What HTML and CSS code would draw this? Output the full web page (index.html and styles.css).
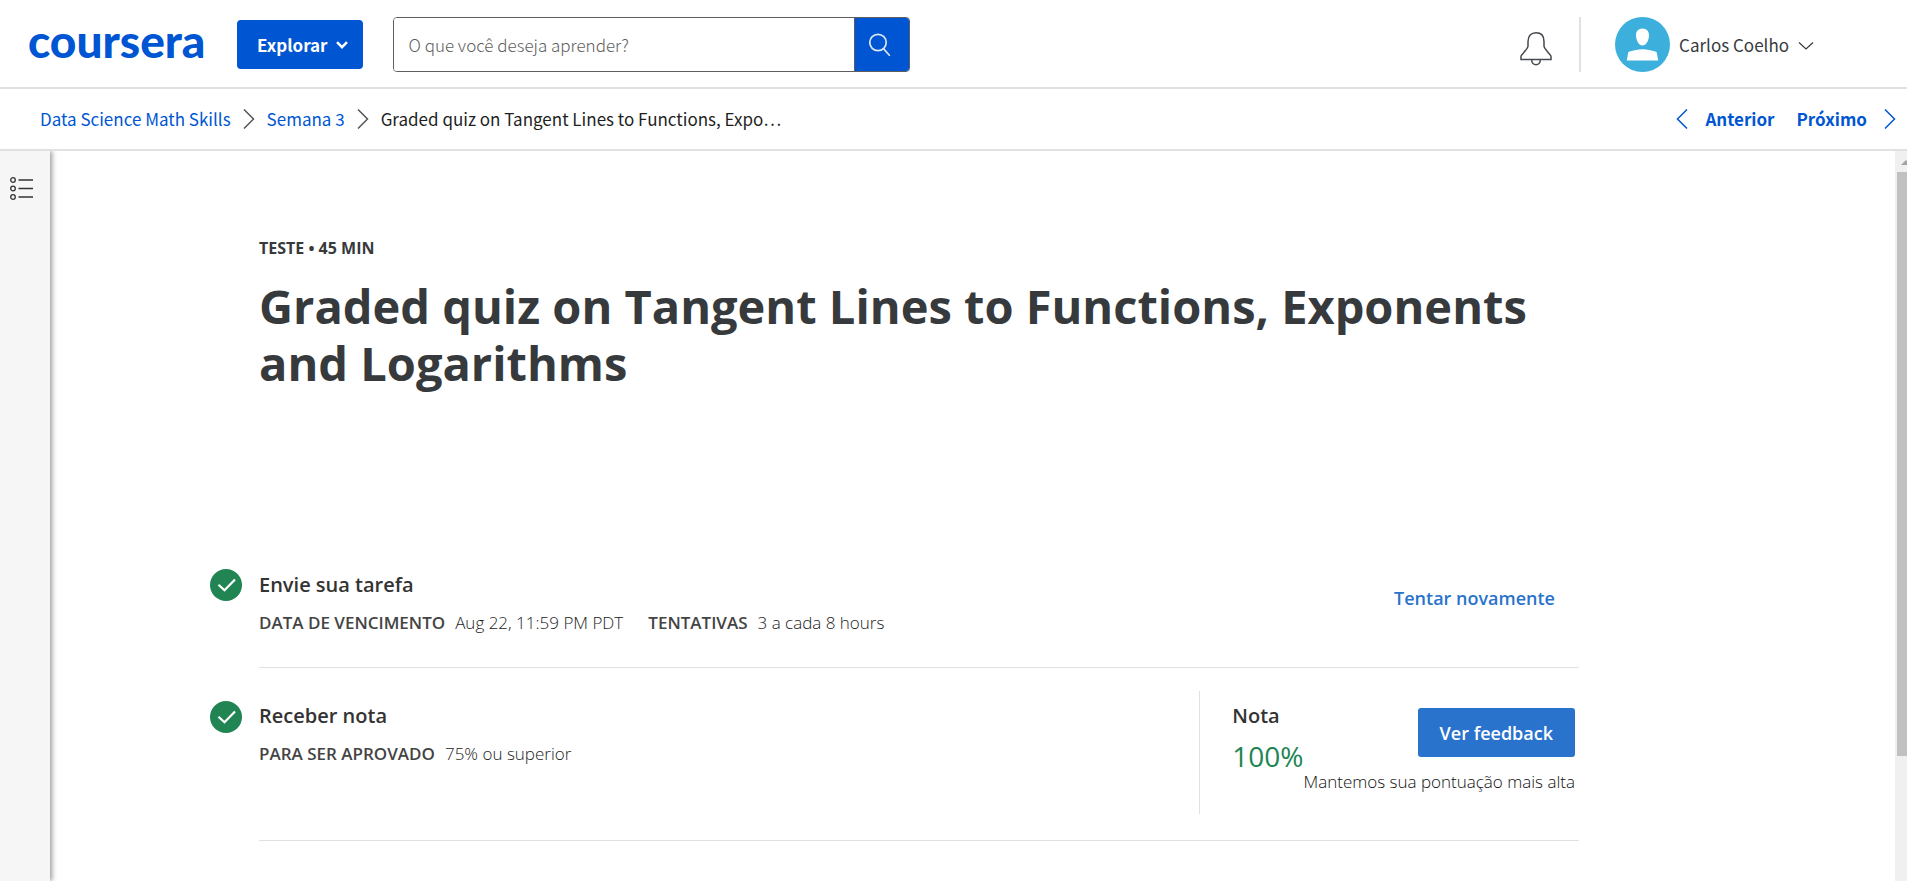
FILE: index.html
```html
<!DOCTYPE html>
<html lang="pt-BR">
<head>
<meta charset="utf-8">
<meta name="viewport" content="width=device-width, initial-scale=1">
<title>Graded quiz on Tangent Lines to Functions, Exponents and Logarithms</title>
<link rel="stylesheet" href="styles.css">
</head>
<body>
<header class="topbar">
  <a class="logo" href="#">coursera</a>
  <button class="explore" type="button">Explorar
    <svg width="12" height="8" viewBox="0 0 12 8" fill="none" stroke="currentColor" stroke-width="2.4"><path d="M1 1.2l5 5 5-5"/></svg>
  </button>
  <form class="search">
    <input class="search-input" type="text" placeholder="O que você deseja aprender?" aria-label="Pesquisar">
    <button class="search-button" type="button" aria-label="Enviar pesquisa">
      <svg width="22" height="24" viewBox="0 0 22 24" fill="none" stroke="currentColor" stroke-width="1.7"><circle cx="9" cy="9.5" r="8.2"/><path d="M14.6 15.8l6.2 7"/></svg>
    </button>
  </form>
  <button class="bell" type="button" aria-label="Notificações">
    <svg width="32" height="34" viewBox="0 0 32 34" fill="none" stroke="currentColor" stroke-width="1.5"><path d="M1 27.5v-3.2c0-1.6 7-7.2 7-10.3V9.500C8 4 11 .8 16 .8s8 3.200 8 8.700V14c0 3.100 7 8.700 7 10.300v3.200z"/><path d="M11.800 27.500v1a4.200 4.200 0 0 0 8.400 0v-1"/></svg>
  </button>
  <button class="account" type="button">
    <svg width="55" height="55" viewBox="0 0 55 55"><circle cx="27.500" cy="27.500" r="27.500" fill="#3dafdc"/><path fill="#fff" d="M27.500 11.500c4.200 0 6.700 3 6.500 7.200-.2 4.800-3 9.800-6.500 9.800s-6.300-5-6.500-9.800c-.2-4.200 2.300-7.200 6.500-7.200zM11.800 43.500l1.300-7.300c.2-1 .6-1.400 1.500-1.700 4-1.300 8.500-2.300 12.900-2.300s8.900 1 12.900 2.300c.9.300 1.300.7 1.500 1.700l1.300 7.300z"/></svg>
    <span>Carlos Coelho</span>
    <svg width="16" height="13" viewBox="0 0 16 13" fill="none" stroke="currentColor" stroke-width="1.200"><path d="M1 4.500l7 6.500 7-6.500"/></svg>
  </button>
</header>

<div class="coursebar">
  <nav class="crumbs" aria-label="Trilha">
    <a href="#">Data Science Math Skills</a>
    <svg class="chev" width="12" height="20" viewBox="0 0 12 20"><path d="M1 .5L10.500 10 1 19.500"/></svg>
    <a href="#">Semana 3</a>
    <svg class="chev" width="12" height="20" viewBox="0 0 12 20"><path d="M1 .5L10.500 10 1 19.500"/></svg>
    <span>Graded quiz on Tangent Lines to Functions, Expo…</span>
  </nav>
  <nav class="pager" aria-label="Itens">
    <a class="pager-link" href="#"><svg class="chev" width="12" height="20" viewBox="0 0 12 20"><path d="M11 .5L1.500 10l9.500 9.500"/></svg>Anterior</a>
    <a class="pager-link" href="#">Próximo<svg class="chev" width="12" height="20" viewBox="0 0 12 20"><path d="M1 .5L10.500 10 1 19.500"/></svg></a>
  </nav>
</div>

<div class="workspace">
  <aside class="rail">
    <button class="rail-button" type="button" aria-label="Abrir índice">
      <svg width="24" height="23" viewBox="0 0 24 23" fill="none" stroke="currentColor" stroke-width="1.300"><circle cx="3" cy="3" r="2.300"/><circle cx="3" cy="11.500" r="2.300"/><circle cx="3" cy="20" r="2.300"/><path d="M8.500 3H23M8.500 11.500H23M8.500 20H23"/></svg>
    </button>
  </aside>
  <main class="content">
    <div class="sheet">
      <div class="intro">
        <p class="kind">TESTE • 45 MIN</p>
        <h1 class="title">Graded quiz on Tangent Lines to Functions, Exponents and Logarithms</h1>
      </div>
      <section class="step">
        <svg class="check" width="32" height="32" viewBox="0 0 32 32"><circle cx="16" cy="16" r="16" fill="#208552"/><path d="M8.500 15.800l6 5.500L25 10.500" fill="none" stroke="#fff" stroke-width="2.200"/></svg>
        <div class="step-body">
          <div class="step-text">
            <h2 class="step-title">Envie sua tarefa</h2>
            <dl class="facts">
              <div class="fact"><dt>DATA DE VENCIMENTO</dt><dd>Aug 22, 11:59 PM PDT</dd></div>
              <div class="fact"><dt>TENTATIVAS</dt><dd>3 a cada 8 hours</dd></div>
            </dl>
          </div>
          <button class="retry" type="button">Tentar novamente</button>
        </div>
      </section>
      <section class="step step-grade">
        <svg class="check" width="32" height="32" viewBox="0 0 32 32"><circle cx="16" cy="16" r="16" fill="#208552"/><path d="M8.500 15.800l6 5.500L25 10.500" fill="none" stroke="#fff" stroke-width="2.200"/></svg>
        <div class="step-body">
          <div class="step-text">
            <h2 class="step-title">Receber nota</h2>
            <dl class="facts">
              <div class="fact"><dt>PARA SER APROVADO</dt><dd>75% ou superior</dd></div>
            </dl>
          </div>
          <div class="grade">
            <div class="score">
              <h2 class="step-title">Nota</h2>
              <p class="percent">100%</p>
            </div>
            <div class="feedback">
              <button class="feedback-button" type="button">Ver feedback</button>
              <p class="note">Mantemos sua pontuação mais alta</p>
            </div>
          </div>
        </div>
      </section>
    </div>
  </main>
  <div class="scroll" aria-hidden="true">
    <svg class="scroll-arrow" width="12" height="21" viewBox="0 0 12 21"><path d="M6 14l5-5 5 5z" fill="#a3a3a3"/></svg>
    <div class="scroll-thumb"></div>
  </div>
</div>
</body>
</html>
```

FILE: styles.css
```css
* { box-sizing: border-box; }

body {
  margin: 0;
  height: 100vh;
  display: flex;
  flex-direction: column;
  overflow: hidden;
  background: #fff;
  color: #373a3c;
  font-family: "Open Sans", "Noto Sans", sans-serif;
  font-size: 17px;
}

h1, h2, p, dl, dd { margin: 0; }
svg { display: block; flex: none; }
a { text-decoration: none; }
button {
  margin: 0;
  padding: 0;
  border: 0;
  background: none;
  color: inherit;
  font: inherit;
  cursor: pointer;
}

.topbar, .coursebar {
  flex: none;
  display: flex;
  align-items: center;
  border-bottom: 2px solid #e1e1e1;
  font-family: "Noto Sans CJK SC", "Open Sans", sans-serif;
  line-height: 24px;
}

/* Top bar */
.topbar { padding: 17px 93px 15px 28px; }
.logo {
  width: 209px;
  padding-bottom: 8px;
  color: #0056d2;
  font-family: Lato, sans-serif;
  font-weight: 900;
  font-size: 46px;
  line-height: 47px;
}
.explore {
  display: flex;
  align-items: center;
  gap: 8px;
  padding: 13px 15px 12px 20px;
  border-radius: 4px;
  background: #0056d2;
  color: #fff;
  font-weight: 700;
}
.search {
  flex: 0 1 517px;
  display: flex;
  height: 55px;
  margin-left: 30px;
  border: 1px solid #5e5e5e;
  border-radius: 4px;
  overflow: hidden;
}
.search-input {
  flex: 1;
  min-width: 0;
  padding: 0 15px;
  border: 0;
  color: #333;
  font: inherit;
  font-weight: 300;
}
.search-input::placeholder { color: #5e5e5e; opacity: 1; }
.search-button {
  width: 55px;
  display: flex;
  align-items: center;
  padding-left: 14px;
  border-left: 1px solid #5e5e5e;
  background: #0056d2;
  color: #dbe6f8;
}
.bell {
  margin-left: auto;
  padding: 8px 27px 0 0;
  color: #444a50;
}
.account {
  display: flex;
  align-items: center;
  gap: 9px;
  padding-left: 34px;
  border-left: 2px solid #e1e1e1;
  color: #373a3c;
}

/* Course bar */
.coursebar {
  justify-content: space-between;
  gap: 24px;
  padding: 18px 11px 18px 40px;
}
.crumbs, .pager, .pager-link { display: flex; align-items: center; }
.crumbs { gap: 12px; color: #1f1f1f; white-space: nowrap; }
.crumbs a { color: #0056d2; }
.chev { fill: none; stroke: #555; stroke-width: 1.5; }
.pager { gap: 22px; }
.pager-link { gap: 17px; color: #0056d2; font-weight: 700; }
.pager .chev { stroke: #0056d2; }

/* Workspace */
.workspace { flex: 1; min-height: 0; display: flex; }
.rail {
  flex: none;
  width: 50px;
  padding: 26px 0 0 10px;
  background: #f6f6f6;
  box-shadow: 2px 0 5px rgba(0, 0, 0, 0.4);
  clip-path: inset(0 -10px 0 0);
}
.rail-button { display: block; color: #333; }
.content { flex: 1; min-width: 0; padding: 85px 24px 0 160px; overflow: hidden; }
.sheet { max-width: 1369px; }
.intro { padding-left: 49px; min-height: 327px; }
.kind { margin-bottom: 18px; font-weight: 700; font-size: 16px; line-height: 24px; }
.title { font-weight: 700; font-size: 47px; line-height: 57px; }

.step { display: flex; gap: 17px; }
.check { margin-top: 6px; }
.step-body {
  flex: 1;
  display: flex;
  justify-content: space-between;
  padding-top: 8px;
  min-height: 105px;
  border-bottom: 1px solid #e1e1e1;
}
.step-title { font-weight: 600; font-size: 20px; line-height: 28px; color: #333; }
.facts { display: flex; gap: 25px; margin-top: 12px; line-height: 24px; }
.fact { display: flex; gap: 10px; }
.fact dt { color: #444; font-weight: 600; }
.fact dd { color: #222; font-weight: 300; }
.retry {
  align-self: flex-start;
  margin: 15px 24px 0 0;
  color: #2a73cc;
  font-weight: 600;
  font-size: 18px;
  line-height: 24px;
}

.step-grade { padding-top: 23px; }
.step-grade .check { margin-top: 10px; }
.step-grade .step-body { padding: 0 0 26px; }
.step-grade .step-text, .score { padding-top: 11px; }
.grade {
  display: flex;
  min-height: 123px;
  padding: 0 4px 0 32px;
  border-left: 1px solid #e1e1e1;
}
.percent { margin-top: 8px; color: #208552; font-size: 28px; line-height: 36px; }
.feedback { display: flex; flex-direction: column; align-items: flex-end; padding-top: 17px; }
.feedback-button {
  padding: 13px 22px 12px;
  border-radius: 3px;
  background: #2a73cc;
  color: #fff;
  font-weight: 600;
  font-size: 18px;
  line-height: 24px;
}
.note { margin-top: 13px; color: #111; font-weight: 300; line-height: 24px; }

.scroll { flex: none; width: 12px; background: #f0f0f0; }
.scroll-thumb { height: 80%; margin-left: 2px; background: #c1c1c1; }
```
